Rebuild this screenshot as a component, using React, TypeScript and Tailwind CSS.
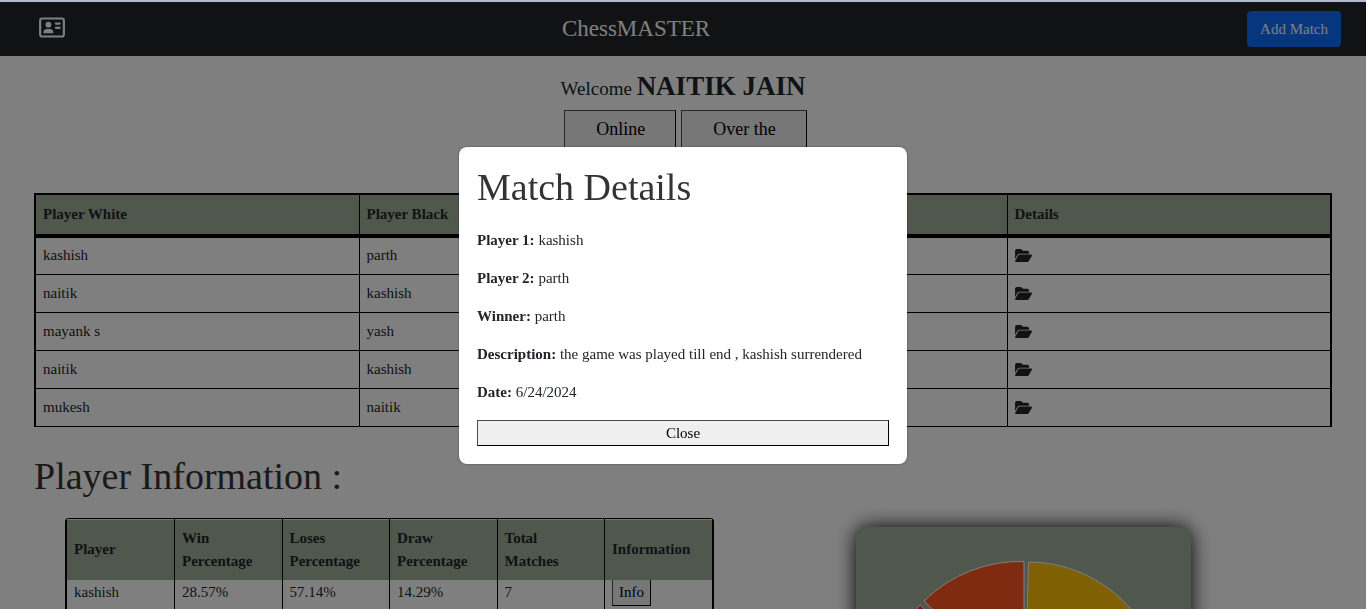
import { FaFolderOpen, FaRegAddressCard } from "react-icons/fa6";

const matches = [
  { white: "kashish", black: "parth" },
  { white: "naitik", black: "kashish" },
  { white: "mayank s", black: "yash" },
  { white: "naitik", black: "kashish" },
  { white: "mukesh", black: "naitik" },
];

const playerColumns = [
  "Player",
  "Win Percentage",
  "Loses Percentage",
  "Draw Percentage",
  "Total Matches",
  "Information",
];

const details = [
  { label: "Player 1:", value: "kashish" },
  { label: "Player 2:", value: "parth" },
  { label: "Winner:", value: "parth" },
  { label: "Description:", value: "the game was played till end , kashish surrendered" },
  { label: "Date:", value: "6/24/2024" },
];

function Navbar() {
  return (
    <header className="flex h-[54px] shrink-0 items-center justify-between bg-[#212529] pr-[25px] pl-[39px] text-white">
      <a href="#profile" aria-label="Profile" className="pb-[3px]">
        <FaRegAddressCard className="h-[23px] w-[26px]" />
      </a>
      <span className="mr-10 text-[23px] leading-[34px]">ChessMASTER</span>
      <button type="button" className="h-9 rounded bg-[#0d6efd] px-[13px]">
        Add Match
      </button>
    </header>
  );
}

function MatchTable() {
  return (
    <table className="w-full table-fixed border-collapse border-x-2 border-t-2 border-b border-black text-left">
      <thead>
        <tr className="h-[42px] border-b-4 border-black bg-[#a1af9b]">
          <th className="border-r border-black px-[7px]">Player White</th>
          <th className="border-r border-black px-[7px]">Player Black</th>
          <th className="border-r border-black px-[7px]" />
          <th className="px-[7px]">Details</th>
        </tr>
      </thead>
      <tbody>
        {matches.map((m, i) => (
          <tr key={i} className="h-[38px] border-b border-black">
            <td className="border-r border-black px-[7px]">{m.white}</td>
            <td className="border-r border-black px-[7px]">{m.black}</td>
            <td className="border-r border-black px-[7px]" />
            <td className="px-[7px]">
              <button type="button" aria-label="Open match details" className="block">
                <FaFolderOpen className="h-[15px] w-[17px]" />
              </button>
            </td>
          </tr>
        ))}
      </tbody>
    </table>
  );
}

function PlayerTable() {
  return (
    <div className="ml-[31px] w-1/2 rounded-t border-x-2 border-t border-black">
      <table className="w-full table-fixed border-collapse text-left">
        <thead>
          <tr className="h-[61px] border-t border-[#f0f0f0] bg-[#a1af9b]">
            {playerColumns.map((c) => (
              <th key={c} className="border-r border-black pr-[14px] pl-[7px] last:border-r-0">
                {c}
              </th>
            ))}
          </tr>
        </thead>
        <tbody>
          <tr className="h-[38px] align-top">
            <td className="border-r border-black px-[7px] pt-px">kashish</td>
            <td className="border-r border-black px-[7px] pt-px">28.57%</td>
            <td className="border-r border-black px-[7px] pt-px">57.14%</td>
            <td className="border-r border-black px-[7px] pt-px">14.29%</td>
            <td className="border-r border-black px-[7px] pt-px">7</td>
            <td className="px-[7px]">
              <button
                type="button"
                className="block h-[26px] border border-t-0 border-black border-l-[#4c4c4c] bg-[#efefef] px-[6px] text-black"
              >
                Info
              </button>
            </td>
          </tr>
        </tbody>
      </table>
    </div>
  );
}

function ResultChart() {
  return (
    <div className="mt-[9px] h-[335px] w-[335px] rounded-[14px] bg-[#a1af9b] shadow-[0_0_20px_#000]">
      <svg viewBox="856 527 335 335" className="block w-full" role="img" aria-label="Results chart">
        <g stroke="#fff" strokeWidth="1">
          <path d="M1028.5 562A136 136 0 0 1 1150 758L1025 698Z" fill="#ffc107" />
          <path d="M1024 561.5V698L924 601A137 137 0 0 1 1024 561.5Z" fill="#ff5722" />
          <path d="M920 605L1016 701L900 760A137 137 0 0 1 920 605Z" fill="#e91e63" />
        </g>
      </svg>
    </div>
  );
}

function MatchDialog() {
  return (
    <div className="fixed inset-x-0 top-[2px] bottom-0 flex items-center justify-center bg-black/50">
      <section
        role="dialog"
        aria-labelledby="dialog-title"
        className="flex w-[448px] flex-col rounded-lg bg-white p-[18px] shadow-[0_0_2px_rgba(0,0,0,0.5)]"
      >
        <h2 id="dialog-title" className="mb-5 text-[38px] leading-[44px] text-[#333]">
          Match Details
        </h2>
        <div className="flex flex-col gap-[15px]">
          {details.map((d) => (
            <p key={d.label}>
              <strong>{d.label}</strong> {d.value}
            </p>
          ))}
        </div>
        <button
          type="button"
          className="mt-4 h-[26px] border border-black border-t-[#4c4c4c] border-l-[#4c4c4c] bg-[#efefef] text-black"
        >
          Close
        </button>
      </section>
    </div>
  );
}

export default function App() {
  return (
    <div className="flex h-screen flex-col overflow-hidden border-t-2 border-[#b3bbd1] bg-white font-['Liberation_Serif',serif] text-[15px] leading-[23px] text-[#212529]">
      <Navbar />
      <main className="px-[34px] pt-3">
        <p className="text-center text-[19px] leading-[36px]">
          Welcome <strong className="text-[27px]">NAITIK JAIN</strong>
        </p>
        <div className="mt-[3px] flex justify-center gap-[5px] pl-[5px] text-[18px] text-black">
          <button
            type="button"
            className="h-[39px] border border-black border-t-[#4c4c4c] border-l-[#4c4c4c] bg-[#efefef] pr-[30px] pl-[31px]"
          >
            Online
          </button>
          <button
            type="button"
            className="h-[39px] border border-black border-t-[#4c4c4c] border-l-[#4c4c4c] bg-[#efefef] pr-[30px] pl-[31px]"
          >
            Over the
          </button>
        </div>
        <div className="mt-11">
          <MatchTable />
        </div>
        <h1 className="mt-[26px] mb-[19px] text-[38px] leading-[46px] text-[#333]">
          Player Information :
        </h1>
        <div className="flex items-start">
          <PlayerTable />
          <div className="flex flex-1 justify-center">
            <ResultChart />
          </div>
        </div>
      </main>
      <MatchDialog />
    </div>
  );
}
